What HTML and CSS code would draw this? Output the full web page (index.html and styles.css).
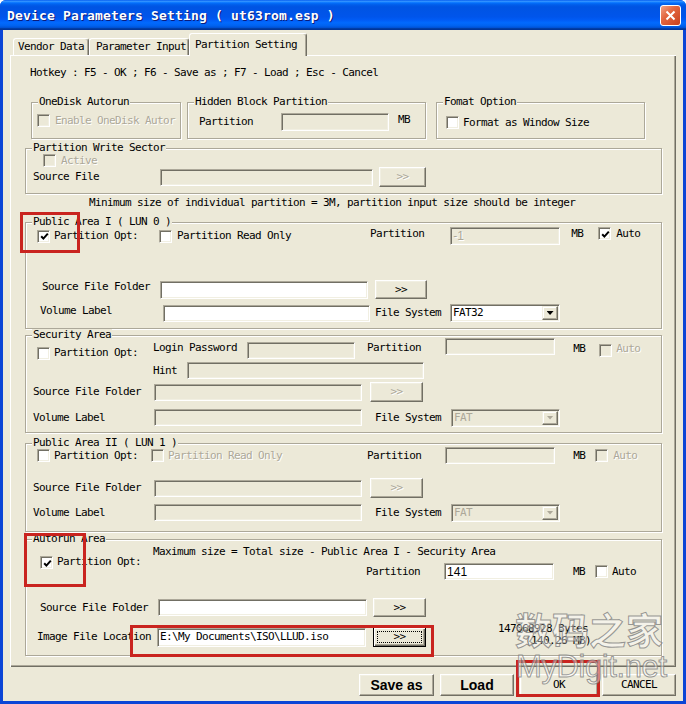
FILE: index.html
```html
<!DOCTYPE html>
<html lang="en">
<head>
<meta charset="utf-8">
<title>Device Parameters Setting</title>
<link rel="stylesheet" href="styles.css">
</head>
<body>
<div class="window">
  <div class="titlebar">
    <span class="title">Device Parameters Setting ( ut63rom.esp )</span>
    <span class="close-btn"><svg width="11" height="11" viewBox="0 0 11 11"><path d="M1.5 1.5 L9.5 9.5 M9.5 1.5 L1.5 9.5" stroke="#fff" stroke-width="2"/></svg></span>
  </div>
  <div class="client">
    <div class="tabs">
      <div class="tab tab-vendor">Vendor Data</div>
      <div class="tab tab-param">Parameter Input</div>
      <div class="tab tab-part">Partition Setting</div>
    </div>

    <div class="panel">
      <div class="t hotkey">Hotkey : F5 - OK ; F6 - Save as ; F7 - Load ; Esc - Cancel</div>

      <div class="top-groups">
        <div class="group g-onedisk">
          <span class="legend">OneDisk Autorun</span>
          <div class="row mt11 h13">
            <span class="cb off ml5"></span>
            <span class="t gray ml5">Enable OneDisk Autor</span>
          </div>
        </div>
        <div class="group g-hidden ml6">
          <span class="legend">Hidden Block Partition</span>
          <div class="row mt10 h18">
            <span class="t ml11">Partition</span>
            <span class="in off ml28 w108 h18"></span>
            <span class="t ml9 lift">MB</span>
          </div>
        </div>
        <div class="group g-fomat ml10">
          <span class="legend">Fomat Option</span>
          <div class="row mt13 h13">
            <span class="cb ml9"></span>
            <span class="t ml4">Format as Window Size</span>
          </div>
        </div>
      </div>

      <div class="group wide g-pws mt9">
        <span class="legend">Partition Write Sector</span>
        <div class="row mt5 h13">
          <span class="cb off ml17"></span>
          <span class="t gray ml5">Active</span>
        </div>
        <div class="row h20">
          <span class="t ml7">Source File</span>
          <span class="in off ml61 w213 h17"></span>
          <span class="btn off ml6 w47 h20">&gt;&gt;</span>
        </div>
      </div>

      <div class="t minsize">Minimum size of individual partition = 3M, partition input size should be integer</div>

      <div class="group wide g-pa1 mt13">
        <span class="legend">Public Area I ( LUN 0 )</span>
        <div class="row mt4 h18">
          <span class="cb ml11"><svg class="tick" width="9" height="9" viewBox="0 0 9 9"><path d="M1.2 4.2 L3.4 6.6 L7.8 1.6" fill="none" stroke="#000" stroke-width="2"/></svg></span>
          <span class="t ml4">Partition Opt:</span>
          <span class="cb ml21"></span>
          <span class="t ml5">Partition Read Only</span>
          <span class="t ml79 lift">Partition</span>
          <span class="in off ml26 w110 h18"><span class="num gray">-1</span></span>
          <span class="t ml11 lift">MB</span>
          <span class="cb ml15 lift"><svg class="tick" width="9" height="9" viewBox="0 0 9 9"><path d="M1.2 4.2 L3.4 6.6 L7.8 1.6" fill="none" stroke="#000" stroke-width="2"/></svg></span>
          <span class="t ml5 lift">Auto</span>
        </div>
        <div class="row mt35 h19">
          <span class="t ml16 lift">Source File Folder</span>
          <span class="in ml10 w208 h18"></span>
          <span class="btn ml7 w52 h19">&gt;&gt;</span>
        </div>
        <div class="row mt5 h18">
          <span class="t ml14 lift">Volume Label</span>
          <span class="in ml51 w207 h17"></span>
          <span class="t ml5">File System</span>
          <span class="sel ml9 w110 h18"><span class="sel-text">FAT32</span><span class="sel-arrow"></span></span>
        </div>
      </div>

      <div class="group wide g-sec mt6">
        <span class="legend">Security Area</span>
        <div class="row top mt2 h22">
          <span class="cb ml11 mt9"></span>
          <span class="t ml4 mt9">Partition Opt:</span>
          <span class="t ml15 mt4">Login Password</span>
          <span class="in off ml10 mt4 w108 h17"></span>
          <span class="t ml12 mt4">Partition</span>
          <span class="in off ml24 w110 h17"></span>
          <span class="t ml18 mt5">MB</span>
          <span class="cb off ml14 mt6"></span>
          <span class="t gray ml4 mt5">Auto</span>
        </div>
        <div class="row mt2 h17">
          <span class="t ml127">Hint</span>
          <span class="in off ml10 w237 h17"></span>
        </div>
        <div class="row mt3 h20">
          <span class="t ml7">Source File Folder</span>
          <span class="in off ml13 w208 h17"></span>
          <span class="btn off ml8 w53 h20">&gt;&gt;</span>
        </div>
        <div class="row mt6 h19">
          <span class="t ml7">Volume Label</span>
          <span class="in off ml49 w208 h17"></span>
          <span class="t ml13">File System</span>
          <span class="sel off ml10 w109 h18"><span class="sel-text">FAT</span><span class="sel-arrow"></span></span>
        </div>
      </div>

      <div class="group wide g-pa2 mt10">
        <span class="legend">Public Area II ( LUN 1 )</span>
        <div class="row mt3 h17">
          <span class="cb ml11"></span>
          <span class="t ml4">Partition Opt:</span>
          <span class="cb off ml13"></span>
          <span class="t gray ml4">Partition Read Only</span>
          <span class="t ml85">Partition</span>
          <span class="in off ml24 w110 h17"></span>
          <span class="t ml18">MB</span>
          <span class="cb off ml10"></span>
          <span class="t gray ml5">Auto</span>
        </div>
        <div class="row mt14 h20">
          <span class="t ml7">Source File Folder</span>
          <span class="in off ml13 w208 h17"></span>
          <span class="btn off ml8 w53 h20">&gt;&gt;</span>
        </div>
        <div class="row mt5 h19">
          <span class="t ml7">Volume Label</span>
          <span class="in off ml49 w208 h17"></span>
          <span class="t ml13">File System</span>
          <span class="sel off ml10 w109 h18"><span class="sel-text">FAT</span><span class="sel-arrow"></span></span>
        </div>
      </div>

      <div class="group wide g-auto mt7">
        <span class="legend">Autorun Area</span>
        <div class="row top mt6 h36">
          <span class="cb ml14 mt10"><svg class="tick" width="9" height="9" viewBox="0 0 9 9"><path d="M1.2 4.2 L3.4 6.6 L7.8 1.6" fill="none" stroke="#000" stroke-width="2"/></svg></span>
          <span class="t ml4 mt10">Partition Opt:</span>
          <div class="col ml12">
            <div class="t">Maximum size = Total size - Public Area I - Security Area</div>
            <div class="row mt5 h17">
              <span class="t ml213">Partition</span>
              <span class="in ml24 w110 h17"><span class="num">141</span></span>
              <span class="t ml19">MB</span>
              <span class="cb ml10"></span>
              <span class="t ml4">Auto</span>
            </div>
          </div>
        </div>
        <div class="row mt16 h19">
          <span class="t ml14">Source File Folder</span>
          <span class="in ml10 w209 h17"></span>
          <span class="btn ml6 w53 h19">&gt;&gt;</span>
        </div>
        <div class="row mt10 h20">
          <span class="t ml11">Image File Location</span>
          <span class="in ml6 w209 h19"><span class="t">E:\My Documents\ISO\LLUD.iso</span></span>
          <span class="btn focus ml7 w53 h20"><span class="focus-ring">&gt;&gt;</span></span>
          <div class="size-info ml72">
            <div class="t">147068928 Bytes</div>
            <div class="t size-mb">(140.26 MB)</div>
          </div>
        </div>
      </div>
    </div>

    <div class="buttons">
      <span class="btn big w75">Save as</span>
      <span class="btn big w74 ml6">Load</span>
      <span class="btn w78 ml6">OK</span>
      <span class="btn w74 ml4">CANCEL</span>
    </div>
  </div>
</div>

<!-- red highlight frames drawn over the dialog -->
<div class="mark mark-pa1"></div>
<div class="mark mark-auto"></div>
<div class="mark mark-image"></div>
<div class="mark mark-ok"></div>

<!-- site watermark -->
<div class="wm wm-cn" lang="zh">数码之家</div>
<div class="wm wm-en">MyDigit.net</div>
</body>
</html>
```

FILE: styles.css
```css
* { box-sizing: border-box; }

html, body { margin: 0; padding: 0; }

body {
  position: relative;
  width: 686px;
  height: 704px;
  overflow: hidden;
  background: #fff;
  font-family: "DejaVu Sans Mono", "Liberation Mono", monospace;
  font-size: 11px;
  letter-spacing: -0.62px;
  line-height: 12px;
  color: #000;
}

/* ---------- window frame ---------- */
.window {
  display: flex;
  flex-direction: column;
  width: 686px;
  height: 704px;
  background: #0B45D6;
  border-radius: 6px 6px 0 0;
  overflow: hidden;
}

.titlebar {
  flex: none;
  height: 30px;
  display: flex;
  align-items: center;
  justify-content: space-between;
  padding: 1px 5px 0 7px;
  background: linear-gradient(to bottom,
    #0058EE 0%, #3593FF 4%, #288EFF 6%, #127DFF 8%, #036FFC 10%,
    #0262EE 14%, #0057E5 20%, #0054E3 24%, #0055EB 56%, #005BF5 66%,
    #026AFE 76%, #0062EF 86%, #0052D6 92%, #0040AB 94%, #003092 100%);
}

.title {
  font-weight: bold;
  font-size: 13px;
  letter-spacing: 0.17px;
  color: #fff;
  text-shadow: 1px 1px 0 #0A1B7A;
  white-space: pre;
}

.close-btn {
  width: 21px;
  height: 21px;
  display: flex;
  align-items: center;
  justify-content: center;
  border: 1px solid #fff;
  border-radius: 3px;
  background: linear-gradient(135deg, #F2A286 0%, #E2663F 40%, #C9401C 100%);
}

.client {
  flex: 1;
  display: flex;
  flex-direction: column;
  margin: 0 3px 3px;
  background: #ECE9D8;
}

/* ---------- tabs ---------- */
.tabs {
  flex: none;
  display: flex;
  align-items: flex-end;
  height: 25px;
  padding-left: 10px;
}

.tab {
  height: 17px;
  display: flex;
  align-items: center;
  white-space: pre;
  background: #ECE9D8;
  border-top: 1px solid #fff;
  border-left: 1px solid #fff;
  border-right: 1px solid #716F64;
  box-shadow: inset -1px 0 0 #ACA899;
  border-radius: 3px 3px 0 0;
}

.tab-vendor { width: 76px; padding-left: 4px; }
.tab-param { width: 100px; padding-left: 6px; }
.tab-part {
  position: relative;
  z-index: 1;
  width: 118px;
  height: 23px;
  margin-bottom: -1px;
  padding-left: 5px;
}

.panel {
  flex: none;
  display: flow-root;
  margin: 0 7px;
  height: 612px;
  background: #ECE9D8;
  box-shadow: inset 1px 1px 0 #fff, inset -1px -1px 0 #716F64, inset -2px -2px 0 #ACA899;
}

.hotkey { margin: 12px 0 0 20px; }
.minsize { margin: 3px 0 0 79px; }

/* ---------- group boxes ---------- */
.top-groups {
  display: flex;
  margin-top: 23px;
  padding-left: 21px;
}

.group {
  position: relative;
  border: 1px solid #ACA899;
  box-shadow: inset 1px 1px 0 #fff, 1px 1px 0 #fff;
}

.legend {
  position: absolute;
  top: -7px;
  left: 6px;
  height: 12px;
  padding: 0 1px;
  line-height: 12px;
  white-space: pre;
  background: #ECE9D8;
}

.g-onedisk { width: 150px; height: 37px; }
.g-hidden { width: 239px; height: 37px; }
.g-fomat { width: 209px; height: 37px; }

.wide { width: 637px; margin-left: 15px; }
.g-pws { height: 46px; }
.g-pa1 { height: 107px; }
.g-sec { height: 98px; }
.g-pa2 { height: 89px; }
.g-auto { height: 117px; }

/* ---------- rows and text ---------- */
.row { display: flex; align-items: center; }
.row.top { align-items: flex-start; }
.col { flex: none; }

.t {
  flex: none;
  height: 12px;
  line-height: 12px;
  white-space: pre;
}

/* labels that sit a little above the row's centre line */
.lift { margin-bottom: 5px; }

.gray { color: #ACA899; text-shadow: 1px 1px 0 #fff; }

.num {
  font-family: "Liberation Sans", Arial, sans-serif;
  font-size: 12px;
  letter-spacing: 0;
  line-height: 12px;
}

.size-info { align-self: flex-start; margin-top: -4px; }
.size-mb { padding-left: 27px; }

/* ---------- controls ---------- */
.cb {
  flex: none;
  width: 13px;
  height: 13px;
  display: flex;
  align-items: center;
  justify-content: center;
  background: #fff;
  border: 1px solid;
  border-color: #ACA899 #fff #fff #ACA899;
  box-shadow: inset 1px 1px 0 #716F64, inset -1px -1px 0 #F1EFE2;
}
.cb.off { background: #ECE9D8; }
.tick { display: block; margin: 1px 0 0 1px; }

.in {
  flex: none;
  display: flex;
  align-items: center;
  padding: 0 2px;
  overflow: hidden;
  background: #fff;
  border: 1px solid;
  border-color: #ACA899 #fff #fff #ACA899;
  box-shadow: inset 1px 1px 0 #716F64, inset -1px -1px 0 #F1EFE2;
}
.in.off { background: #ECE9D8; }

.sel {
  flex: none;
  display: flex;
  align-items: center;
  justify-content: space-between;
  padding: 0 1px 0 2px;
  background: #fff;
  border: 1px solid;
  border-color: #ACA899 #fff #fff #ACA899;
  box-shadow: inset 1px 1px 0 #716F64, inset -1px -1px 0 #F1EFE2;
}
.sel.off { background: #ECE9D8; color: #ACA899; }
.sel-text { white-space: pre; }

.sel-arrow {
  flex: none;
  width: 16px;
  height: 14px;
  display: flex;
  align-items: center;
  justify-content: center;
  background: #ECE9D8;
  border: 1px solid;
  border-color: #F1EFE2 #716F64 #716F64 #F1EFE2;
  box-shadow: inset -1px -1px 0 #ACA899, inset 1px 1px 0 #fff;
}
.sel-arrow::after {
  content: "";
  width: 7px;
  height: 4px;
  background: #000;
  clip-path: polygon(0 0, 100% 0, 50% 100%);
}
.sel.off .sel-arrow::after { background: #ACA899; }

.btn {
  flex: none;
  display: flex;
  align-items: center;
  justify-content: center;
  white-space: pre;
  background: #ECE9D8;
  border: 1px solid;
  border-color: #fff #716F64 #716F64 #fff;
  box-shadow: inset -1px -1px 0 #ACA899, inset 1px 1px 0 #F1EFE2;
}
.btn.off { color: #ACA899; text-shadow: 1px 1px 0 #fff; }
.btn.focus {
  border-color: #000;
  box-shadow: inset 1px 1px 0 #fff, inset -1px -1px 0 #716F64, inset -2px -2px 0 #ACA899;
}
.focus-ring {
  width: calc(100% - 6px);
  height: calc(100% - 6px);
  display: flex;
  align-items: center;
  justify-content: center;
  border: 1px dotted #000;
}

.big {
  font-family: "Liberation Sans", Arial, sans-serif;
  font-weight: bold;
  font-size: 14px;
  letter-spacing: 0;
}

.buttons {
  flex: none;
  display: flex;
  justify-content: flex-end;
  height: 22px;
  margin-top: 7px;
  padding-right: 7px;
}
.buttons .btn { height: 22px; }

/* ---------- red highlight frames ---------- */
.mark {
  position: absolute;
  z-index: 5;
  border: 3px solid #C9241F;
}
.mark-pa1 { left: 20px; top: 212px; width: 60px; height: 41px; }
.mark-auto { left: 24px; top: 533px; width: 62px; height: 54px; }
.mark-image { left: 130px; top: 625px; width: 304px; height: 32px; }
.mark-ok { left: 516px; top: 660px; width: 84px; height: 37px; }

/* ---------- watermark ---------- */
.wm {
  position: absolute;
  z-index: 6;
  line-height: 1;
  letter-spacing: 0;
  white-space: nowrap;
  color: rgba(255, 255, 255, 0.45);
  -webkit-text-stroke: 1px rgba(120, 120, 120, 0.75);
}
.wm-cn {
  left: 515px;
  top: 611px;
  font-family: "Noto Sans CJK SC", sans-serif;
  font-weight: 700;
  font-size: 37px;
}
.wm-en {
  left: 516px;
  top: 651px;
  font-family: "Liberation Sans", Arial, sans-serif;
  font-size: 31px;
  letter-spacing: -0.4px;
}

/* ---------- spacing helpers ---------- */
.ml4 { margin-left: 4px; }
.ml5 { margin-left: 5px; }
.ml6 { margin-left: 6px; }
.ml7 { margin-left: 7px; }
.ml8 { margin-left: 8px; }
.ml9 { margin-left: 9px; }
.ml10 { margin-left: 10px; }
.ml11 { margin-left: 11px; }
.ml12 { margin-left: 12px; }
.ml13 { margin-left: 13px; }
.ml14 { margin-left: 14px; }
.ml15 { margin-left: 15px; }
.ml16 { margin-left: 16px; }
.ml17 { margin-left: 17px; }
.ml18 { margin-left: 18px; }
.ml19 { margin-left: 19px; }
.ml21 { margin-left: 21px; }
.ml24 { margin-left: 24px; }
.ml26 { margin-left: 26px; }
.ml28 { margin-left: 28px; }
.ml49 { margin-left: 49px; }
.ml51 { margin-left: 51px; }
.ml61 { margin-left: 61px; }
.ml72 { margin-left: 72px; }
.ml79 { margin-left: 79px; }
.ml85 { margin-left: 85px; }
.ml127 { margin-left: 127px; }
.ml213 { margin-left: 213px; }

.mt2 { margin-top: 2px; }
.mt3 { margin-top: 3px; }
.mt4 { margin-top: 4px; }
.mt5 { margin-top: 5px; }
.mt6 { margin-top: 6px; }
.mt7 { margin-top: 7px; }
.mt9 { margin-top: 9px; }
.mt10 { margin-top: 10px; }
.mt11 { margin-top: 11px; }
.mt13 { margin-top: 13px; }
.mt14 { margin-top: 14px; }
.mt16 { margin-top: 16px; }
.mt35 { margin-top: 35px; }

.h13 { height: 13px; }
.h17 { height: 17px; }
.h18 { height: 18px; }
.h19 { height: 19px; }
.h20 { height: 20px; }
.h22 { height: 22px; }
.h36 { height: 36px; }

.w47 { width: 47px; }
.w52 { width: 52px; }
.w53 { width: 53px; }
.w74 { width: 74px; }
.w75 { width: 75px; }
.w78 { width: 78px; }
.w108 { width: 108px; }
.w109 { width: 109px; }
.w110 { width: 110px; }
.w207 { width: 207px; }
.w208 { width: 208px; }
.w209 { width: 209px; }
.w213 { width: 213px; }
.w237 { width: 237px; }
```
